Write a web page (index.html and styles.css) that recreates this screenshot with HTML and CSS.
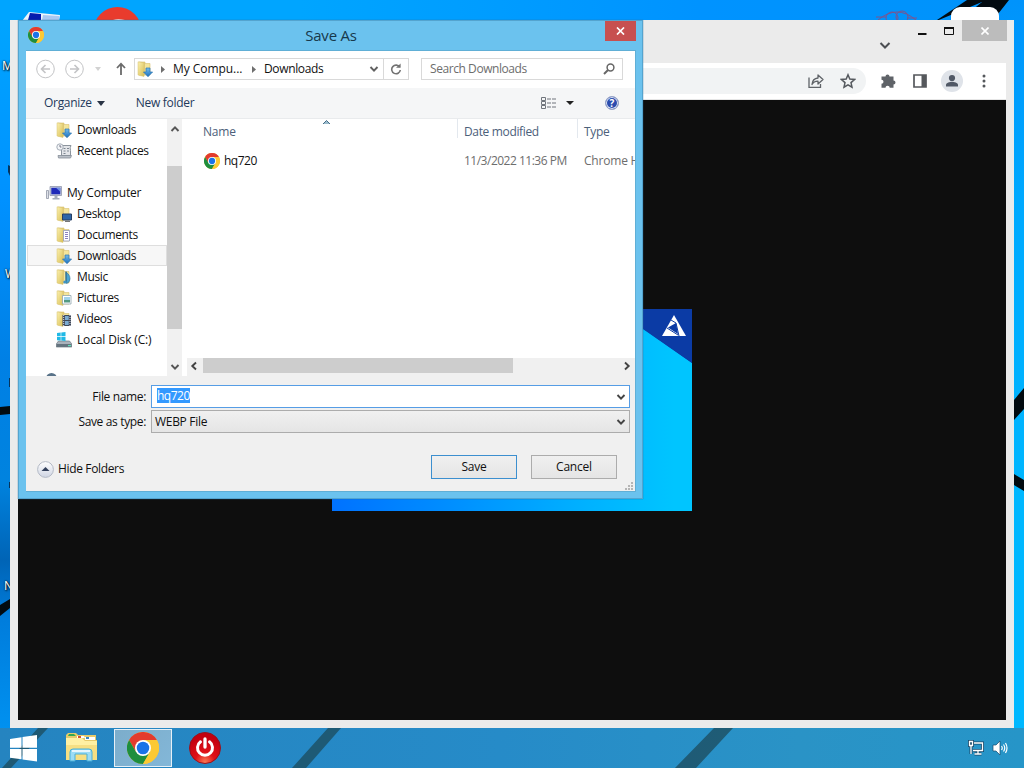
FILE: index.html
```html
<!DOCTYPE html>
<html lang="en">
<head>
<meta charset="utf-8">
<title>Save As</title>
<link rel="stylesheet" href="styles.css">
</head>
<body>
<svg class="defs" width="0" height="0" aria-hidden="true">
  <defs>
    <linearGradient id="fold" x1="0" x2="1" y1="0" y2="1"><stop offset="0" stop-color="#fbf0b0"/><stop offset="1" stop-color="#d9bf54"/></linearGradient>
    <linearGradient id="arrow" x1="0" x2="0" y1="0" y2="1"><stop offset="0" stop-color="#74bdeb"/><stop offset="1" stop-color="#1b6fc0"/></linearGradient>
    <symbol id="chrome" viewBox="0 0 48 48">
      <circle cx="24" cy="24" r="24" fill="#fcc934"/>
      <path d="M3.2 12A24 24 0 0 1 44.8 12H24L13.6 30Z" fill="#e33b2e"/>
      <path d="M3.2 12A24 24 0 0 0 24 48L34.4 30H13.6Z" fill="#1e8e3e"/>
      <path d="M44.8 12H24L34.4 30 24 48A24 24 0 0 0 44.8 12Z" fill="#fcc934"/>
      <circle cx="24" cy="24" r="12" fill="#fff"/><circle cx="24" cy="24" r="9.4" fill="#1a73e8"/>
    </symbol>
    <symbol id="folder" viewBox="0 0 16 16">
      <path d="M2 1h6v13H2z" fill="#e8d276" stroke="#d6c070" stroke-width=".6"/>
      <path d="M7.500 2.500h5.500v11.500H7.500z" fill="#f4e59a" stroke="#d6c070" stroke-width=".6"/>
      <path d="M1 .8l6 1v13.700L1 14z" fill="url(#fold)" stroke="#d6c070" stroke-width=".5"/>
    </symbol>
    <symbol id="down" viewBox="0 0 16 16"><use href="#folder"/><path d="M9 7h4v4h2.6L11 15.7 6.5 11H9z" fill="url(#arrow)" stroke="#2872af" stroke-width=".7"/></symbol>
    <symbol id="desk" viewBox="0 0 16 16"><use href="#folder"/><path d="M6.5 8h9v6h-9z" fill="#2c65a8" stroke="#263f63"/><path d="M9 15.3h5" stroke="#555"/></symbol>
    <symbol id="docs" viewBox="0 0 16 16"><use href="#folder"/><path d="M7.5 3.5h6v10.5h-6z" fill="#fff" stroke="#929ab5" stroke-width=".8"/><path d="M9 5.5h3M9 7.5h3M9 9.5h3M9 11.5h3" stroke="#7a72b8" stroke-width=".9"/></symbol>
    <symbol id="music" viewBox="0 0 16 16"><use href="#folder"/><path d="M10 3q5.500 4 3.500 9-1 2-3 2.500z" fill="#4aa5d3" stroke="#2b6f97" stroke-width=".6"/><path d="M10 2.500v11" stroke="#2a6d98" stroke-width="1.200"/><ellipse cx="9" cy="13" rx="1.700" ry="1.500" fill="#3f94c4"/></symbol>
    <symbol id="pics" viewBox="0 0 16 16"><use href="#folder"/><path d="M6.500 5.500h8.500v8.500H6.500z" fill="#fff" stroke="#8fa5ad" stroke-width=".8"/><path d="M8 7h6v3H8z" fill="#9fd2e9"/><path d="M8 10h6v2.500H8z" fill="#539a83"/></symbol>
    <symbol id="video" viewBox="0 0 16 16"><use href="#folder"/><path d="M6.500 4h8.500v11H6.500z" fill="#414a58"/><path d="M9 5h3.700v4H9zM9 10h3.700v4H9z" fill="#7babd2"/><path d="M7.700 4v11M14 4v11" stroke="#dde" stroke-width="1" stroke-dasharray="1 1"/></symbol>
    <symbol id="recent" viewBox="0 0 16 16"><path d="M6 2.500h9q-1.500 2-.5 5v5H5.500v-9z" fill="#e3e5e9" stroke="#8c949d"/><path d="M2 12.500h13.500l-1 2.500H2.500z" fill="#b9bfc7" stroke="#868e98" stroke-width=".8"/><path d="M7.500 5.500h2M11 5.500h2M7.500 8h2M11 8h2M7.500 10.500h2" stroke="#7d8691"/><circle cx="4" cy="4" r="3.200" fill="#f3f5f7" stroke="#a5adb7"/><path d="M4 2v2h1.500" fill="none" stroke="#778"/></symbol>
    <symbol id="pc" viewBox="0 0 16 16"><path d="M.5 5.500h2v8h-2z" fill="#dfe2e9" stroke="#8f96a4" stroke-width=".8"/><path d="M4 1.500h11.500v9H4z" fill="#c9cfde" stroke="#9098ad" stroke-width=".8"/><path d="M5.300 2.800h9v6.500h-9z" fill="#202bb9"/><path d="M10 2.800h4.300v4z" fill="#7192e6"/><path d="M8.500 11h3v2h2v1.500H6.500V13h2z" fill="#a5adbc"/></symbol>
    <symbol id="disk" viewBox="0 0 16 16"><path d="M2.500 9h11l2.300 3v3H.3v-3z" fill="#a9b2bb" stroke="#6d7882" stroke-width=".7"/><path d="M.5 12h15v3H.5z" fill="#65747f"/><path d="M12 13h3v1.200h-3z" fill="#63e4ba"/><path d="M1 1l3.700-.5v3.700H1zM5.300.4L9.500 0v4.200H5.300zM1 5h3.700v3.600L1 8.200zM5.300 5h4.200v4l-4.200-.4z" fill="#20b9e6"/></symbol>
    <symbol id="chev" viewBox="0 0 10 10"><path d="M1.500 3L5 6.700 8.500 3" fill="none" stroke="currentColor" stroke-width="1.900"/></symbol>
  </defs>
</svg>

<main class="desktop">
  <svg class="wallpaper" viewBox="0 0 1024 768" aria-hidden="true">
    <path d="M934 22L967 0H1009L998 14 988 20H960L982 2Z" fill="#020a10"/>
    <path d="M0 407l10-1v8l-10 1zM0 605l10-6v9L0 616zM1014 400l10-12v21l-10 11zM1014 474l10 6v11l-10-6z" fill="#020b10"/>
    <path d="M8 165l2 1v10l-2-4zM9 378h1v9H9zM9 482h1v6H9z" fill="#06345c"/>
    <path d="M29 12l31 3-1 6H22z" fill="#eef4fb"/><path d="M30 13l11 1v6H28z" fill="#051cae"/><path d="M43 15l16 1v4H42z" fill="#a9c8f2"/>
    <circle cx="117.500" cy="31" r="24" fill="#e93b2d"/><path d="M113 20q5-1.500 12 0z" fill="#fff"/>
    <g fill="none" stroke="#b23a60" stroke-width="1" opacity=".7"><circle cx="892" cy="18" r="6"/><circle cx="902" cy="17" r="6"/><path d="M878 20q19-16 38 0"/><path d="M876 17h10M907 18h10"/></g>
    <rect x="951" y="7" width="48" height="30" rx="9" fill="#fff"/>
  </svg>
  <span class="label l1">M</span><span class="label l2">W</span><span class="label l3">N</span>

  <section class="browser">
    <header class="tabstrip">
      <svg class="tabsearch" width="12" height="10" viewBox="0 0 12 10"><path d="M1.500 2L6 6.500 10.500 2" fill="none" stroke="#4c4f53" stroke-width="2"/></svg>
      <div class="winbtns">
        <svg width="46" height="21" viewBox="0 0 46 21"><path d="M2 14h8.500" stroke="#111" stroke-width="2"/><path d="M28.500 7.500h9v7h-9z" fill="none" stroke="#111"/><path d="M28 8h10" stroke="#111" stroke-width="2"/></svg>
        <div class="bclose"><svg width="8" height="8" viewBox="0 0 8 8"><path d="M.5.5l7 7m0-7l-7 7" stroke="#fff" stroke-width="1.600"/></svg></div>
      </div>
    </header>
    <div class="omnibar">
      <div class="address">
        <svg width="16" height="16" viewBox="0 0 16 16" fill="none" stroke="#5f6368" stroke-width="1.300"><path d="M1 4.500V14.400h11.500V11"/><path d="M4 11.500q.5-6 6-6.500V2l5 4.500-5 4.500V8.200Q6 8 4 11.500z" stroke-linejoin="round"/></svg>
        <svg width="16" height="16" viewBox="0 0 16 16"><path d="M8 1.800l1.800 4.300 4.700.4-3.500 3.100 1 4.600-4-2.400-4 2.400 1-4.600L1.500 6.500l4.700-.4z" fill="none" stroke="#55595e" stroke-width="1.500"/></svg>
      </div>
      <div class="actions">
        <svg width="16" height="16" viewBox="0 0 16 16"><path d="M1.500 3.500h4a2 2 0 1 1 4 0h4v4a2 2 0 1 1 0 4v3.300H9.700a2 2 0 1 0-4.200 0h-4v-4a2 2 0 1 0 0-4z" fill="#5f6368"/></svg>
        <svg width="16" height="16" viewBox="0 0 16 16"><path d="M2 2h12v12H2z" fill="none" stroke="#55585c" stroke-width="1.700"/><path d="M9.500 2H14v12H9.500z" fill="#55585c"/></svg>
        <svg width="22" height="22" viewBox="0 0 22 22"><circle cx="11" cy="11" r="11" fill="#dfe3e9"/><circle cx="11" cy="8" r="3.100" fill="#505866"/><path d="M5 16.500v-1.700c0-2 4-3 6-3s6 1 6 3v1.700z" fill="#505866"/></svg>
        <svg width="4" height="16" viewBox="0 0 4 16" fill="#55585c"><circle cx="2" cy="3" r="1.500"/><circle cx="2" cy="8" r="1.500"/><circle cx="2" cy="13" r="1.500"/></svg>
      </div>
    </div>
    <div class="page">
      <svg class="picture" width="360" height="202" viewBox="0 0 360 202">
        <defs><linearGradient id="sky" x1="0" x2="1"><stop offset="0" stop-color="#0072ff"/><stop offset=".3" stop-color="#008cff"/><stop offset=".7" stop-color="#00b1ff"/><stop offset=".95" stop-color="#00c5ff"/></linearGradient></defs>
        <path d="M0 0h360v202H0z" fill="url(#sky)"/><path d="M282 0h78v54L282 0z" fill="#0b3ba5"/><path d="M282 0h78v54L306 16z" fill="#0b3ba5"/>
        <path d="M342 6l12 21h-24z" fill="#fff"/><path d="M336 18.500l8-4.500 2 11z" fill="#0b3ba5"/><path d="M339 11l5 3 3 13M335 19l11 7" fill="none" stroke="#0b3ba5" stroke-width="1"/>
      </svg>
    </div>
  </section>

  <section class="dialog">
    <header class="titlebar">
      <svg class="appicon" width="16" height="16"><use href="#chrome"/></svg>
      <h1>Save As</h1>
      <div class="close"><svg width="9" height="8" viewBox="0 0 9 8"><path d="M1 .5l7 7m0-7l-7 7" stroke="#fff" stroke-width="1.700"/></svg></div>
    </header>
    <div class="client">
      <nav class="navbar">
        <svg class="hist" width="48" height="20" viewBox="0 0 48 20" fill="none" stroke="#c3c4c6"><circle cx="9.500" cy="10" r="8.800"/><circle cx="38.500" cy="10" r="8.800"/><path d="M14 10H5.500m4-4l-4 4 4 4M34 10h8.500m-4-4l4 4-4 4" stroke-width="1.600"/></svg>
        <svg class="histdrop" width="6" height="4"><path d="M0 0h6L3 4z" fill="#d2d2d2"/></svg>
        <svg class="up" width="10" height="14" viewBox="0 0 10 14"><path d="M5 13V2M1 6l4-4.300L9 6" fill="none" stroke="#6b6b6b" stroke-width="1.800"/></svg>
        <div class="crumbs">
          <svg width="16" height="16"><use href="#down"/></svg>
          <svg class="c1" width="4" height="7"><path d="M0 0l4 3.500L0 7z" fill="#6e6e6e"/></svg>
          <span class="t-comp">My Compu...</span>
          <svg class="c2" width="4" height="7"><path d="M0 0l4 3.500L0 7z" fill="#6e6e6e"/></svg>
          <span class="t-down">Downloads</span>
          <svg class="drop" width="10" height="10"><use href="#chev"/></svg>
          <div class="refresh"><svg width="12" height="12" viewBox="0 0 12 12"><path d="M9.700 4.200A4.300 4.300 0 1 0 10.300 7" fill="none" stroke="#737373" stroke-width="1.600"/><path d="M6 4.700h4.600V.4z" fill="#737373"/></svg></div>
        </div>
        <div class="search"><span>Search Downloads</span><svg width="12" height="12" viewBox="0 0 12 12" fill="none" stroke="#676767"><circle cx="7.500" cy="4.500" r="3.400" stroke-width="1.500"/><path d="M5 7L1 11" stroke-width="2"/></svg></div>
      </nav>
      <div class="toolbar">
        <span class="t-org">Organize</span><svg class="orgdrop" width="8" height="5"><path d="M0 0h8L4 5z" fill="#2a3445"/></svg>
        <span class="t-new">New folder</span>
        <svg class="view" width="15" height="13" viewBox="0 0 15 13" fill="none" stroke="#70757c"><path d="M.5.500h4v3h-4zM.5 4.500h4v3h-4zM.5 8.500h4v3h-4z"/><path d="M6 2h4m1 0h4M6 6h4m1 0h4M6 10h4m1 0h4"/></svg>
        <svg class="viewdrop" width="8" height="4"><path d="M0 0h8L4 4z" fill="#222"/></svg>
        <div class="help">?</div>
      </div>
      <div class="body">
        <div class="tree">
          <ul>
            <li><svg><use href="#down"/></svg><span>Downloads</span></li>
            <li><svg><use href="#recent"/></svg><span>Recent places</span></li>
            <li></li>
            <li class="root"><svg><use href="#pc"/></svg><span>My Computer</span></li>
            <li><svg><use href="#desk"/></svg><span>Desktop</span></li>
            <li><svg><use href="#docs"/></svg><span>Documents</span></li>
            <li class="sel"><svg><use href="#down"/></svg><span>Downloads</span></li>
            <li><svg><use href="#music"/></svg><span>Music</span></li>
            <li><svg><use href="#pics"/></svg><span>Pictures</span></li>
            <li><svg><use href="#video"/></svg><span>Videos</span></li>
            <li class="drive"><svg><use href="#disk"/></svg><span>Local Disk (C:)</span></li>
            <li></li>
            <li class="net"><i></i></li>
          </ul>
          <div class="vscroll"><svg class="flip" width="10" height="10"><use href="#chev"/></svg><div class="vthumb"></div><svg width="10" height="10"><use href="#chev"/></svg></div>
        </div>
        <div class="files">
          <div class="row head"><span class="name">Name</span><span class="date">Date modified</span><span class="type">Type</span>
            <svg class="sort" width="7" height="4"><path d="M0 4l3.500-3.500L7 4z" fill="#9bbccd"/><path d="M0 4l3.500-3.500L7 4" fill="none" stroke="#456d86"/></svg>
          </div>
          <div class="row item"><span class="name"><svg width="16" height="16"><use href="#chrome"/></svg><b>hq720</b></span><span class="date">11/3/2022 11:36 PM</span><span class="type">Chrome H</span></div>
          <div class="hscroll"><svg class="left" width="10" height="10"><use href="#chev"/></svg><div class="hthumb"></div><svg class="right" width="10" height="10"><use href="#chev"/></svg></div>
        </div>
      </div>
      <footer class="foot">
        <div class="field"><label class="t-fn">File name:</label><div class="combo edit"><mark>hq720</mark><svg width="10" height="10"><use href="#chev"/></svg></div></div>
        <div class="field"><label class="t-st">Save as type:</label><div class="combo"><span class="t-webp">WEBP File</span><svg width="10" height="10"><use href="#chev"/></svg></div></div>
        <div class="buttons">
          <div class="hide"><svg width="17" height="17" viewBox="0 0 17 17"><defs><linearGradient id="orb" x1="0" x2="0" y1="0" y2="1"><stop offset="0" stop-color="#fff"/><stop offset="1" stop-color="#cfd5e3"/></linearGradient></defs><circle cx="8.500" cy="8.500" r="7.900" fill="url(#orb)" stroke="#b4bac6"/><path d="M4.500 10l4-4 4 4z" fill="#33405c"/></svg><span class="t-hide">Hide Folders</span></div>
          <button class="save">Save</button><button>Cancel</button>
        </div>
        <svg class="grip" width="8" height="8" fill="#b5b5b5"><path d="M6 0h2v2H6zM3 3h2v2H3zM6 3h2v2H6zM0 6h2v2H0zM3 6h2v2H3zM6 6h2v2H6z"/></svg>
      </footer>
    </div>
  </section>

  <footer class="taskbar">
    <svg class="streaks" width="1024" height="40" viewBox="0 0 1024 40" fill="#1d4f62" opacity=".8"><path d="M38 0h10L11 40H2zM328 0h13L306 40H292zM714 0h19L696 40H675z"/></svg>
    <svg class="start" width="27" height="27" viewBox="0 0 27 27" fill="#fff"><path d="M0 4l11.500-1.700v10.500H0zM12.500 2L27 0v12.800H12.500zM0 14h11.500v10.300L0 22.700zM12.500 14H27v12.500l-14.500-2z"/></svg>
    <svg class="explorer" width="33" height="30" viewBox="0 0 33 30"><path d="M1 2l2-2h8l2 2h18v5h1v20H1z" fill="#e7ca6b"/><path d="M4 1h5l2 2H3z" fill="#35a852"/><path d="M12 3h7l1 2h-8z" fill="#fff"/><path d="M13 3h3v2h-3z" fill="#d25032"/><path d="M20 4h10v3H20z" fill="#fff"/><path d="M21 4h3v2h-3z" fill="#3a87c6"/><path d="M1 5h16l3 3h12v19H1z" fill="#fff0a3"/><path d="M1 12h31v15H1z" fill="#f6df83"/><path d="M5 28V19q0-3 3-3h16q3 0 3 3v9h-5v-7H10v7z" fill="#9bdcf5" stroke="#4aafd7"/><path d="M7 18h18" stroke="#fff" stroke-width="1.500"/></svg>
    <div class="task"><svg width="32" height="32"><use href="#chrome"/></svg></div>
    <svg class="power" width="32" height="32" viewBox="0 0 32 32"><defs><radialGradient id="red" cx=".5" cy=".95" r=".8"><stop offset="0" stop-color="#fa7852"/><stop offset=".4" stop-color="#df1118"/><stop offset="1" stop-color="#c30010"/></radialGradient></defs><circle cx="16" cy="16" r="15.500" fill="url(#red)" stroke="#95131e"/><path d="M11.500 9.800a7.500 7.500 0 1 0 9 0" fill="none" stroke="#fff" stroke-width="3" stroke-linecap="round"/><path d="M16 7v8" stroke="#fff" stroke-width="3.300" stroke-linecap="round"/></svg>
    <div class="tray">
      <svg width="16" height="16" viewBox="0 0 16 16" fill="none"><g stroke="#17496b" stroke-width="3"><path d="M6 3h8.500v7.500H5M10 11v2.500M6.500 14h7M1.500 1.500h3v4h-3zM3 6v8"/></g><g stroke="#fff" stroke-width="1.300"><path d="M6 3h8.500v7.500H5M10 11v2.500M6.500 14h7M1.500 1.500h3v4h-3zM3 6v8"/></g></svg>
      <svg width="16" height="16" viewBox="0 0 16 16"><path d="M1 5h3l4-4v14l-4-4H1z" fill="#fff" stroke="#17496b" stroke-width=".7"/><path d="M9.500 6q1.500 2 0 4M11.500 4.500q2.500 3.500 0 7M13.500 3q3 5 0 10" fill="none" stroke="#fff" stroke-width="1.200"/></svg>
    </div>
  </footer>
</main>
</body>
</html>
```
FILE: styles.css
```css
* { box-sizing: border-box; }
body { margin: 0; font: 12px/16px "Open Sans", "Noto Sans", sans-serif; letter-spacing: -0.2px; color: #111; }
h1, ul { margin: 0; padding: 0; }
svg { display: block; flex: none; }
span, label { white-space: nowrap; flex: none; }
.defs { position: absolute; }
.desktop { position: relative; width: 1024px; height: 768px; overflow: hidden; display: flex; flex-direction: column; justify-content: flex-end; background: linear-gradient(90deg, #00a5ff 0, #00a5ff 300px, #0093ff 700px, #0093fb 980px, transparent 1010px) 0 0 / 100% 20px no-repeat, linear-gradient(#00a7ff, #0091ff 200px, #0080e5 360px, #0083df 480px, #0064b6 560px, #007ddc 620px, #0098f7) 0 0 / 500px 100% no-repeat, linear-gradient(#0093fb, #00a9ff 200px, #00b7ff 500px, #00b8ff); }
.wallpaper { position: absolute; inset: 0; }
.label { position: absolute; color: #fff; text-shadow: 1px 1px 2px #000, 0 0 2px #000; }
.l1 { left: 2px; top: 58px; }
.l2 { left: 5px; top: 266px; }
.l3 { left: 4px; top: 578px; }

.browser { position: absolute; left: 10px; top: 20px; width: 1004px; height: 708px; padding: 0 8px 8px; background: #ebebeb; display: flex; flex-direction: column; }
.tabstrip { height: 43px; display: flex; justify-content: flex-end; }
.tabsearch { margin: 21px 25px 0 0; }
.winbtns { display: flex; margin-right: -1px; }
.bclose { width: 45px; height: 21px; background: #bcbcbc; display: flex; align-items: center; justify-content: center; }
.omnibar { height: 37px; background: #fff; display: flex; align-items: center; justify-content: space-between; padding-right: 20px; border-bottom: 1px solid #e6e6e6; }
.address { width: 848px; height: 26px; border-radius: 13px; background: #f1f3f4; display: flex; align-items: center; justify-content: flex-end; gap: 16px; padding-right: 10px; }
.actions { display: flex; align-items: center; }
.actions svg:nth-child(2) { margin-left: 16px; }
.actions svg:nth-child(3) { margin-left: 13px; }
.actions svg:nth-child(4) { margin-left: 19px; }
.page { flex: 1; background: #0e0e0e; display: flex; align-items: center; justify-content: center; }

.dialog { position: absolute; left: 18px; top: 20px; width: 625px; height: 479px; padding: 0 6px 6px 7px; border: 1px solid #54a4cf; background: #6bc2ee; display: flex; flex-direction: column; box-shadow: 0 0 1px #2c6d93; }
.titlebar { height: 29px; display: flex; align-items: flex-start; justify-content: space-between; }
.appicon { margin: 6px 0 0 2px; }
h1 { font-size: 15px; line-height: 20px; font-weight: 400; color: #17384b; margin: 4px 0 0 13px; letter-spacing: -0.2px; }
.close { width: 31px; height: 20px; background: #c75050; display: flex; align-items: center; justify-content: center; }
.client { flex: 1; border: 1px solid #60afd6; border-width: 1px 1px 1px 0; background: #fff; display: flex; flex-direction: column; min-height: 0; }
.navbar { height: 37px; display: flex; align-items: center; padding: 0 0 1px 10px; }
.histdrop { margin-left: 11px; }
.up { margin-left: 15px; margin-right: 8px; }
.crumbs { width: 275px; height: 22px; border: 1px solid #d9d9d9; display: flex; align-items: center; padding-left: 2px; margin-right: 12px; }
.c1 { margin: 0 8px 0 8px; }
.t-comp { width: 71px; letter-spacing: -0.05px; }
.c2 { margin: 0 8px 0 8px; }
.t-down { width: 60px; letter-spacing: -0.35px; }
.drop { margin: 0 4px 0 auto; color: #606060; }
.refresh { width: 25px; height: 20px; border-left: 1px solid #d9d9d9; display: flex; align-items: center; justify-content: center; }
.search { width: 202px; height: 22px; border: 1px solid #d9d9d9; display: flex; align-items: center; justify-content: space-between; padding: 0 7px 0 8px; color: #6d6d6d; letter-spacing: -0.43px; }
.toolbar { height: 31px; background: #f5f6f7; border-bottom: 1px solid #e9ebed; display: flex; align-items: center; color: #1e395b; padding: 0 16px 0 18px; letter-spacing: -0.3px; }
.orgdrop { margin: 0 31px 0 5px; }
.view { margin-left: auto; }
.viewdrop { margin-left: 10px; }
.help { margin-left: 31px; width: 14px; height: 14px; border-radius: 50%; background: #2b4cae; border: 1px solid #9ca7c7; box-shadow: inset 0 0 0 1px #e1e8f6; color: #fff; font-size: 10px; font-weight: 700; line-height: 12px; text-align: center; letter-spacing: 0; }
.body { height: 257px; display: flex; }
.tree { width: 157px; display: flex; overflow: hidden; letter-spacing: -0.38px; }
ul { width: 141px; list-style: none; padding-left: 1px; }
li { height: 21px; display: flex; align-items: center; padding-left: 28px; gap: 5px; border: 1px solid transparent; }
li svg { width: 16px; height: 16px; }
.root { padding-left: 18px; letter-spacing: -0.2px; }
.drive { letter-spacing: -0.15px; }
.sel { background: #f7f7f7; border-color: #dedede; }
.net { padding: 0 0 0 18px; align-items: flex-start; }
.net i { width: 11px; height: 11px; border-radius: 50%; background: #587288; margin-top: 1px; }
.vscroll { width: 15px; background: #f1f1f1; display: flex; flex-direction: column; align-items: center; padding: 5px 0 4px; color: #555; }
.flip { transform: rotate(180deg); }
.vthumb { width: 15px; height: 163px; background: #cdcdcd; margin: 32px 0 auto; }
.files { flex: 1; min-width: 0; display: flex; flex-direction: column; padding-left: 4px; }
.row { display: flex; color: #6d6d6d; overflow: hidden; position: relative; align-items: center; }
.name { width: 270px; padding-left: 16px; display: flex; align-items: center; }
.name svg { margin-left: 1px; }
.name b { font-weight: 400; color: #111; margin-left: 4px; letter-spacing: -0.5px; }
.date { width: 120px; padding-left: 7px; letter-spacing: -0.5px; }
.type { padding-left: 7px; }
.head { height: 26px; color: #4c607a; align-items: stretch; line-height: 26px; }
.head .date, .head .type { border-left: 1px solid #e3e8ee; height: 19px; padding-left: 6px; letter-spacing: -0.35px; }
.sort { position: absolute; left: 136px; top: 1px; }
.item { height: 31px; }
.hscroll { margin-top: auto; height: 18px; background: #f0f0f0; display: flex; align-items: flex-start; padding: 0 3px 0 2px; color: #444; }
.hscroll svg { margin-top: 3px; }
.left { transform: rotate(90deg); }
.right { transform: rotate(-90deg); margin-left: auto; }
.hthumb { width: 310px; height: 15px; background: #cdcdcd; margin-left: 4px; }
.foot { flex: 1; background: #f0f0f0; padding: 9px 5px 0 0; position: relative; }
.field { display: flex; align-items: center; margin-bottom: 2px; }
.field label { width: 125px; padding-right: 5px; text-align: right; letter-spacing: -0.35px; }
.combo { flex: 1; height: 23px; border: 1px solid #acacac; background: linear-gradient(#f0f0f0, #e5e5e5); display: flex; align-items: center; justify-content: space-between; padding: 0 3px; color: #111; }
.t-webp { letter-spacing: -0.3px; }
.combo svg { color: #444; }
.edit { background: #fff; border-color: #569de5; padding-left: 5px; }
mark { background: #3399ff; color: #fff; line-height: 15px; margin-top: -2px; letter-spacing: -0.5px; }
.buttons { display: flex; gap: 14px; margin-top: 22px; padding-right: 13px; }
.hide { display: flex; align-items: center; gap: 4px; padding-left: 11px; height: 28px; margin-right: auto; letter-spacing: -0.35px; }
button { width: 86px; height: 24px; padding: 0; border: 1px solid #acacac; background: linear-gradient(#f0f0f0, #e5e5e5); font: inherit; letter-spacing: inherit; color: #111; }
.save { border-color: #3c8fcf; }
.grip { position: absolute; right: 2px; bottom: 1px; }

.taskbar { position: relative; height: 40px; background: linear-gradient(90deg, #2584c0, #268bc8 500px, #2a93c6 800px, #2695c8); display: flex; align-items: center; padding: 0 16px 0 10px; }
.streaks { position: absolute; left: 0; top: 0; }
.taskbar > * { z-index: 1; }
.streaks { z-index: 0; }
.start { position: relative; }
.explorer { margin-left: 28px; position: relative; }
.task { position: relative; margin-left: 16px; width: 58px; height: 38px; border: 1px solid #e6f0f7; background: linear-gradient(135deg, #7cadcb, #83b7d8); display: flex; align-items: center; justify-content: center; }
.power { margin-left: 17px; position: relative; }
.tray { margin-left: auto; display: flex; gap: 8px; position: relative; }
```
